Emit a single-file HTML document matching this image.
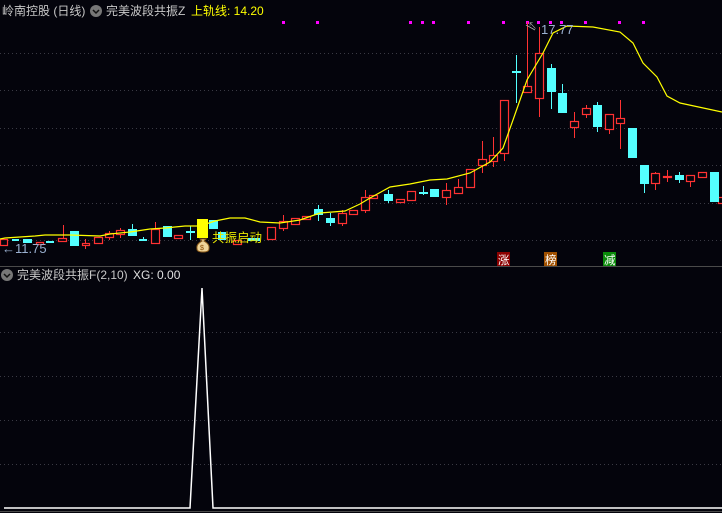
<!DOCTYPE html>
<html><head><meta charset="utf-8"><style>
html,body{margin:0;padding:0;background:#04040c;width:722px;height:513px;overflow:hidden}
svg{display:block}
text{font-family:"Liberation Sans","Noto Sans CJK SC",sans-serif}
</style></head><body>
<svg width="722" height="513" viewBox="0 0 722 513" xmlns="http://www.w3.org/2000/svg">
<rect width="722" height="513" fill="#04040c"/>
<g stroke="#3a3a44" stroke-width="1" stroke-dasharray="1,3">
<line x1="0" y1="53.5" x2="722" y2="53.5"/><line x1="0" y1="90.5" x2="722" y2="90.5"/>
<line x1="0" y1="128.5" x2="722" y2="128.5"/><line x1="0" y1="165.5" x2="722" y2="165.5"/>
<line x1="0" y1="203.5" x2="722" y2="203.5"/><line x1="0" y1="240.5" x2="722" y2="240.5"/>
<line x1="0" y1="332.5" x2="722" y2="332.5"/><line x1="0" y1="376.5" x2="722" y2="376.5"/>
<line x1="0" y1="420.5" x2="722" y2="420.5"/><line x1="0" y1="464.5" x2="722" y2="464.5"/>
</g>
<line x1="0" y1="266.5" x2="722" y2="266.5" stroke="#4a4a4a"/>
<line x1="0" y1="511.5" x2="722" y2="511.5" stroke="#4a4a4a"/>
<text x="2" y="15" font-size="12" fill="#c8c8c8">岭南控股 (日线)</text>
<circle cx="96" cy="11" r="6" fill="#777"/><path d="M93 10l3 3 3-3" stroke="#111" stroke-width="1.5" fill="none"/>
<text x="106" y="15" font-size="12" fill="#c8c8c8">完美波段共振Z</text>
<text x="191" y="15" font-size="12" fill="#ffff00">上轨线: 14.20</text>
<g fill="#ff00ff">
<rect x="282" y="21" width="3" height="3"/><rect x="316" y="21" width="3" height="3"/><rect x="409" y="21" width="3" height="3"/><rect x="421" y="21" width="3" height="3"/><rect x="432" y="21" width="3" height="3"/><rect x="467" y="21" width="3" height="3"/><rect x="502" y="21" width="3" height="3"/><rect x="526" y="21" width="3" height="3"/><rect x="537" y="21" width="3" height="3"/><rect x="549" y="21" width="3" height="3"/><rect x="560" y="21" width="3" height="3"/><rect x="584" y="21" width="3" height="3"/><rect x="618" y="21" width="3" height="3"/><rect x="642" y="21" width="3" height="3"/>
</g>
<g stroke="#ff3232" stroke-width="1">
<line x1="63.5" y1="225" x2="63.5" y2="238"/><line x1="85.5" y1="239" x2="85.5" y2="249"/><line x1="109.5" y1="231" x2="109.5" y2="240"/><line x1="120.5" y1="228" x2="120.5" y2="238"/><line x1="155.5" y1="222" x2="155.5" y2="229"/>
<line x1="283.5" y1="215" x2="283.5" y2="231"/><line x1="342.5" y1="210" x2="342.5" y2="226"/>
<line x1="365.5" y1="190" x2="365.5" y2="213"/><line x1="446.5" y1="183" x2="446.5" y2="205"/><line x1="458.5" y1="179" x2="458.5" y2="191"/>
<line x1="482.5" y1="141" x2="482.5" y2="173"/><line x1="493.5" y1="137" x2="493.5" y2="167"/><line x1="504.5" y1="153" x2="504.5" y2="161"/>
<line x1="527.5" y1="22" x2="527.5" y2="92"/><line x1="539.5" y1="27" x2="539.5" y2="117"/><line x1="574.5" y1="112" x2="574.5" y2="138"/><line x1="586.5" y1="105" x2="586.5" y2="118"/><line x1="609.5" y1="114" x2="609.5" y2="134"/><line x1="620.5" y1="100" x2="620.5" y2="149"/><line x1="655.5" y1="172" x2="655.5" y2="190"/><line x1="667.5" y1="170" x2="667.5" y2="182"/><line x1="690.5" y1="175" x2="690.5" y2="187"/>
</g>
<g stroke="#54ffff" stroke-width="1">
<line x1="132.5" y1="224" x2="132.5" y2="236"/><line x1="143.5" y1="237" x2="143.5" y2="241"/><line x1="190.5" y1="226" x2="190.5" y2="240"/><line x1="318.5" y1="205" x2="318.5" y2="221"/><line x1="330.5" y1="213" x2="330.5" y2="226"/><line x1="388.5" y1="190" x2="388.5" y2="203"/><line x1="423.5" y1="186" x2="423.5" y2="195"/>
<line x1="516.5" y1="55" x2="516.5" y2="103"/><line x1="551.5" y1="64" x2="551.5" y2="109"/><line x1="562.5" y1="84" x2="562.5" y2="113"/><line x1="597.5" y1="102" x2="597.5" y2="132"/><line x1="644.5" y1="184" x2="644.5" y2="193"/><line x1="679.5" y1="172" x2="679.5" y2="183"/>
</g>
<g stroke="#ff3232" stroke-width="1.2" fill="#04040c">
<rect x="0.5" y="239.5" width="7" height="6"/><rect x="36.5" y="242.5" width="7" height="2"/><rect x="58.5" y="238.5" width="8" height="3"/><rect x="82.5" y="243.5" width="7" height="2"/><rect x="94.5" y="237.5" width="8" height="6"/><rect x="105.5" y="233.5" width="8" height="4"/><rect x="116.5" y="230.5" width="8" height="4"/><rect x="151.5" y="229.5" width="8" height="14"/><rect x="174.5" y="235.5" width="8" height="3"/>
<rect x="233.5" y="240.5" width="8" height="4"/><rect x="267.5" y="227.5" width="8" height="12"/><rect x="279.5" y="221.5" width="8" height="7"/><rect x="291.5" y="218.5" width="8" height="6"/><rect x="302.5" y="216.5" width="8" height="3"/><rect x="338.5" y="213.5" width="8" height="10"/><rect x="349.5" y="210.5" width="8" height="4"/>
<rect x="361.5" y="197.5" width="8" height="13"/><rect x="369.5" y="195.5" width="8" height="3"/><rect x="396.5" y="199.5" width="8" height="3"/><rect x="407.5" y="191.5" width="8" height="9"/><rect x="442.5" y="190.5" width="8" height="7"/><rect x="454.5" y="187.5" width="8" height="6"/><rect x="466.5" y="169.5" width="8" height="18"/>
<rect x="478.5" y="159.5" width="8" height="6"/><rect x="489.5" y="155.5" width="8" height="6"/><rect x="500.5" y="100.5" width="8" height="53"/><rect x="523.5" y="86.5" width="8" height="6"/><rect x="535.5" y="53.5" width="8" height="45"/><rect x="570.5" y="121.5" width="8" height="6"/><rect x="582.5" y="108.5" width="8" height="6"/><rect x="605.5" y="114.5" width="8" height="15"/><rect x="616.5" y="118.5" width="8" height="5"/><rect x="651.5" y="173.5" width="8" height="10"/><rect x="663.5" y="176.5" width="8" height="1"/><rect x="686.5" y="175.5" width="8" height="6"/><rect x="698.5" y="172.5" width="8" height="5"/><rect x="718.5" y="197.5" width="6" height="6"/>
</g>
<g fill="#54ffff">
<rect x="12" y="239" width="7" height="2"/><rect x="23" y="239" width="9" height="4"/><rect x="46" y="241" width="8" height="2"/><rect x="70" y="231" width="9" height="15"/><rect x="128" y="229" width="9" height="7"/><rect x="139" y="239" width="8" height="2"/><rect x="163" y="226" width="9" height="11"/><rect x="186" y="231" width="9" height="2"/>
<rect x="209" y="220" width="9" height="9"/><rect x="218" y="232" width="8" height="8"/><rect x="248" y="238" width="12" height="3"/><rect x="314" y="209" width="9" height="6"/><rect x="326" y="218" width="9" height="5"/>
<rect x="384" y="194" width="9" height="7"/><rect x="419" y="192" width="9" height="2"/><rect x="430" y="189" width="9" height="8"/>
<rect x="512" y="71" width="9" height="2"/><rect x="547" y="68" width="9" height="24"/><rect x="558" y="93" width="9" height="20"/><rect x="593" y="105" width="9" height="22"/><rect x="628" y="128" width="9" height="30"/><rect x="640" y="165" width="9" height="19"/><rect x="675" y="175" width="9" height="5"/><rect x="710" y="172" width="9" height="30"/>
</g>
<rect x="197" y="219" width="11" height="19" fill="#ffff00"/>
<polyline fill="none" stroke="#ffff00" stroke-width="1.2" points="0,239 5,238 20,237 35,236 45,235 70,235 100,236 110,234 130,232 150,229 165,228 185,226 200,226 215,221 230,218 245,218 260,222 280,223 300,220 320,213 345,211 360,204 370,198 390,187 410,184 430,180 447,179 470,173 490,162 503,148 513,120 527,80 543,53 553,33 567,26 593,27 620,32 633,43 643,63 657,77 667,96 680,103 722,112"/>
<text x="212" y="242" font-size="12.5" fill="#e8e800">共振启动</text>
<g transform="translate(203,245)"><path d="M-3,-6 h6 l-2,2 q6,3 5,8 q0,3 -6,3 q-6,0 -6,-3 q-1,-5 5,-8z" fill="#f0d59a" stroke="#8a5a1a" stroke-width="1"/><text x="-3" y="5" font-size="7" fill="#8a4a00">$</text></g>
<text x="2" y="253" font-size="13" fill="#9ab0d0">←11.75</text>
<path d="M526 25l9 5" stroke="#aaa" fill="none"/><text x="528" y="29" font-size="9" fill="#aaa">↖</text>
<text x="541" y="34" font-size="13" fill="#9ab0d0">17.77</text>
<rect x="497" y="252" width="13" height="14" fill="#8b0000"/><text x="498" y="264" font-size="11.5" fill="#fff">涨</text>
<rect x="544" y="252" width="13" height="14" fill="#a05000"/><text x="545" y="264" font-size="11.5" fill="#fff">榜</text>
<rect x="603" y="252" width="13" height="14" fill="#0a8a0a"/><text x="604" y="264" font-size="11.5" fill="#fff">减</text>
<circle cx="7" cy="275" r="6" fill="#777"/><path d="M4 274l3 3 3-3" stroke="#111" stroke-width="1.5" fill="none"/>
<text x="17" y="279" font-size="12" fill="#c8c8c8">完美波段共振F(2,10)</text>
<text x="133" y="279" font-size="12" fill="#e0e0e0">XG: 0.00</text>
<polyline fill="none" stroke="#ffffff" stroke-width="1.5" points="4,508 190,508 202,288 213,508 722,508"/>
</svg>
</body></html>
